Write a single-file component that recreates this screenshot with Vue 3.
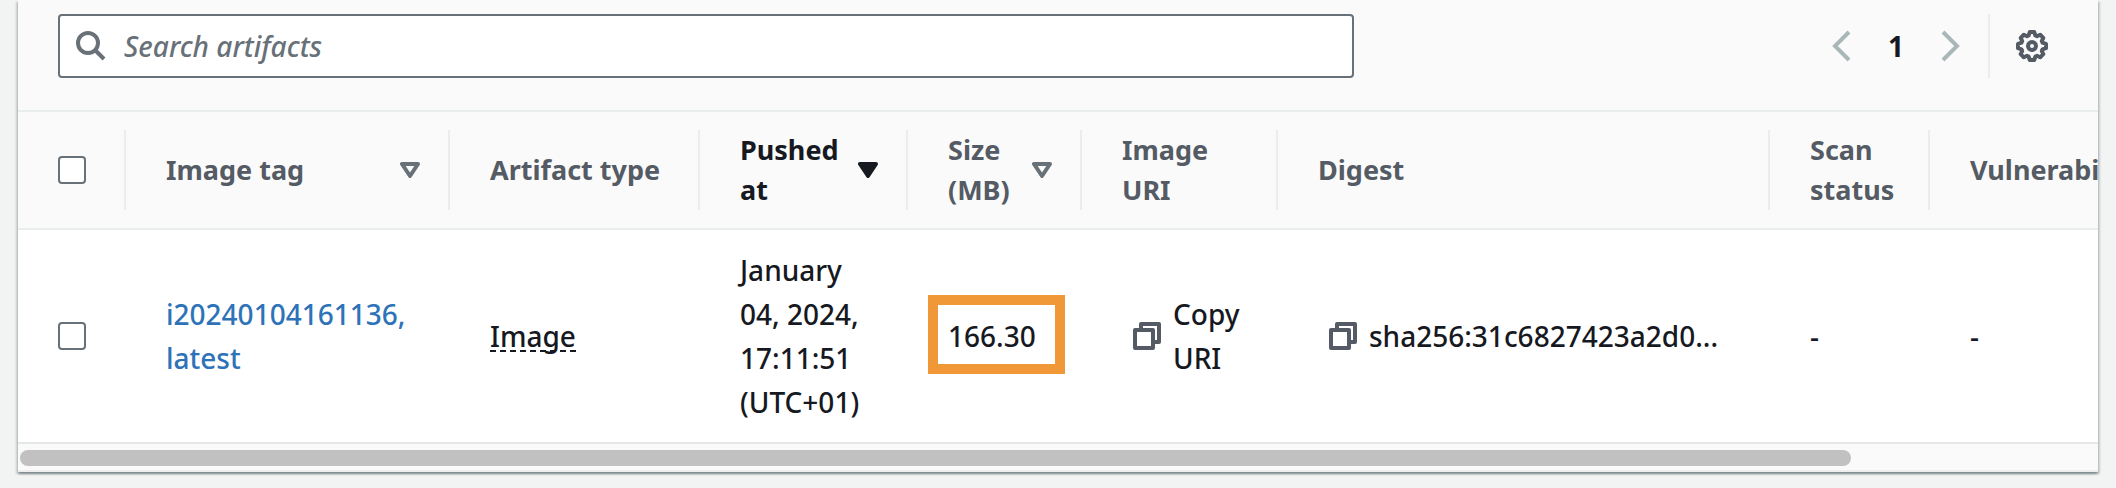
<script setup>
import { ref } from 'vue'

const query = ref('')
const columns = [
  { key: 'tag', label: 'Image tag', sort: 'none' },
  { key: 'type', label: 'Artifact type' },
  { key: 'pushed', label: 'Pushed at', sort: 'active' },
  { key: 'size', label: 'Size (MB)', sort: 'none' },
  { key: 'uri', label: 'Image URI' },
  { key: 'digest', label: 'Digest' },
  { key: 'scan', label: 'Scan status' },
  { key: 'vuln', label: 'Vulnerabilities' },
]
</script>

<template>
  <main class="page">
    <section class="panel">
      <div class="toolbar">
        <label class="search">
          <svg class="search-icon" viewBox="0 0 30 30" aria-hidden="true">
            <circle cx="12" cy="12" r="10" />
            <path d="M19 19l9 9" />
          </svg>
          <input v-model="query" type="search" placeholder="Search artifacts" aria-label="Search artifacts" />
        </label>
        <div class="tools">
          <nav class="pages" aria-label="Pagination">
            <button type="button" class="icon-button" aria-label="Previous page">
              <svg class="chevron" viewBox="0 0 20 32"><path d="M17 2L3 16l14 14" /></svg>
            </button>
            <button type="button" class="page-number" aria-current="page">1</button>
            <button type="button" class="icon-button" aria-label="Next page">
              <svg class="chevron" viewBox="0 0 20 32"><path d="M3 2l14 14L3 30" /></svg>
            </button>
          </nav>
          <button type="button" class="icon-button settings" aria-label="Preferences">
            <svg class="gear" viewBox="0 0 32 32">
              <path d="M13.8 2h4.400l1.200 3.500 1.600.7 3.200-1.500 3.100 3.100-1.500 3.200.7 1.600 3.500 1.200v4.400l-3.500 1.200-.7 1.600 1.500 3.200-3.100 3.100-3.200-1.500-1.600.7-1.200 3.500h-4.400l-1.200-3.500-1.600-.7-3.200 1.500-3.100-3.100 1.500-3.200-.7-1.600-3.500-1.200v-4.400l3.500-1.200.7-1.600-1.500-3.200 3.100-3.100 3.200 1.500 1.600-.7z" />
              <circle cx="16" cy="16" r="4" />
            </svg>
          </button>
        </div>
      </div>

      <div class="table-wrap">
        <table>
          <colgroup>
            <col class="c-check" />
            <col v-for="c in columns" :key="c.key" :class="'c-' + c.key" />
          </colgroup>
          <thead>
            <tr>
              <th scope="col" class="check"><input type="checkbox" aria-label="Select all artifacts" /></th>
              <th v-for="c in columns" :key="c.key" scope="col" :class="{ active: c.sort === 'active' }">
                <div class="head">
                  <span>{{ c.label }}</span>
                  <button v-if="c.sort" type="button" class="icon-button" :aria-label="'Sort by ' + c.label">
                    <svg class="sort" viewBox="0 0 20 16"><path d="M2 2h16l-8 12z" /></svg>
                  </button>
                </div>
              </th>
            </tr>
          </thead>
          <tbody>
            <tr>
              <td class="check"><input type="checkbox" aria-label="Select image latest" /></td>
              <td><a href="#">i20240104161136, latest</a></td>
              <td><span class="hint">Image</span></td>
              <td>January 04, 2024, 17:11:51 (UTC+01)</td>
              <td class="size">166.30<span class="marker"></span></td>
              <td>
                <div class="copy">
                  <button type="button" class="icon-button" aria-label="Copy image URI">
                    <svg class="copy-icon" viewBox="0 0 28 28"><path d="M8 6V2h18v18h-4M2 8h18v18H2z" /></svg>
                  </button>
                  <span>Copy URI</span>
                </div>
              </td>
              <td>
                <div class="copy">
                  <button type="button" class="icon-button" aria-label="Copy digest">
                    <svg class="copy-icon" viewBox="0 0 28 28"><path d="M8 6V2h18v18h-4M2 8h18v18H2z" /></svg>
                  </button>
                  <span class="digest">sha256:31c6827423a2d0...</span>
                </div>
              </td>
              <td>-</td>
              <td>-</td>
            </tr>
          </tbody>
        </table>
      </div>
      <div class="scroll-track"><div class="scroll-thumb"></div></div>
    </section>
  </main>
</template>

<style>
html {
  background: #f2f3f3;
}
</style>

<style scoped>
.page {
  padding: 0 18px 16px;
  background: #f2f3f3;
  color: #16191f;
  font: 500 28px/44px "Noto Sans", "Open Sans", sans-serif;
}
.panel {
  background: #fff;
  box-shadow: 0 2px 2px rgba(0, 28, 36, 0.3), 2px 2px 2px rgba(0, 28, 36, 0.15), -2px 2px 2px rgba(0, 28, 36, 0.15), 0 -2px 0 #fafafa;
}
.toolbar {
  display: flex;
  justify-content: space-between;
  align-items: center;
  padding: 14px 40px 32px;
  background: #fafafa;
  border-bottom: 2px solid #eaeded;
}
.search {
  display: flex;
  align-items: center;
  box-sizing: border-box;
  width: 1296px;
  max-width: 66%;
  height: 64px;
  padding: 0 16px;
  gap: 18px;
  background: #fff;
  border: 2px solid #687078;
  border-radius: 4px;
}
.search-icon {
  flex: none;
  width: 30px;
  height: 30px;
  fill: none;
  stroke: #687078;
  stroke-width: 4;
}
.search input {
  flex: 1;
  min-width: 0;
  padding: 0;
  border: 0;
  outline: 0;
  background: none;
  color: inherit;
  font: inherit;
}
.search input::placeholder {
  color: #687078;
  font-style: italic;
  opacity: 1;
}
.tools,
.pages {
  display: flex;
  align-items: center;
}
.pages {
  gap: 30px;
  padding-right: 28px;
}
.icon-button,
.page-number {
  display: flex;
  flex: none;
  padding: 0;
  border: 0;
  background: none;
  color: inherit;
  font: inherit;
}
.page-number {
  justify-content: center;
  width: 28px;
  font-weight: 700;
}
.settings {
  align-items: center;
  height: 64px;
  padding: 0 10px 0 26px;
  border-left: 2px solid #eaeded;
}
.chevron {
  width: 20px;
  height: 32px;
  fill: none;
  stroke: #aab7b8;
  stroke-width: 4;
}
.gear {
  width: 32px;
  height: 32px;
  fill: none;
  stroke: #545b64;
  stroke-width: 4;
  stroke-linejoin: round;
}
.table-wrap {
  overflow: hidden;
}
table {
  width: 2360px;
  table-layout: fixed;
  border-collapse: separate;
  border-spacing: 0;
}
.c-check { width: 108px; }
.c-tag { width: 324px; }
.c-type { width: 250px; }
.c-pushed { width: 208px; }
.c-size { width: 174px; }
.c-uri { width: 196px; }
.c-digest { width: 492px; }
.c-scan { width: 160px; }
th,
td {
  padding: 18px 30px 18px 40px;
  text-align: left;
  vertical-align: middle;
}
th {
  background: linear-gradient(#eaeded, #eaeded) right center / 2px 80px no-repeat #fafafa;
  border-bottom: 2px solid #eaeded;
  color: #545b64;
  font-size: 27px;
  font-weight: 700;
  line-height: 40px;
}
th.active {
  color: #16191f;
}
td {
  border-bottom: 2px solid #e6e8e8;
}
.head {
  display: flex;
  align-items: center;
  justify-content: space-between;
  min-height: 80px;
}
.check {
  padding-right: 0;
}
.check input {
  display: block;
  appearance: none;
  box-sizing: border-box;
  width: 28px;
  height: 28px;
  margin: 0;
  background: #fff;
  border: 2px solid #687078;
  border-radius: 4px;
}
.sort {
  width: 20px;
  height: 16px;
  fill: none;
  stroke: #687078;
  stroke-width: 4;
  stroke-linejoin: round;
}
.active .sort {
  fill: #16191f;
  stroke: #16191f;
}
a {
  color: #2e73b8;
  text-decoration: none;
}
.hint {
  border-bottom: 2px dashed #16191f;
  line-height: 28px;
  display: inline-block;
}
.size {
  position: relative;
}
.marker {
  position: absolute;
  inset: 65px 17px 68px 20px;
  border: 10px solid #f09837;
}
.copy {
  display: flex;
  align-items: center;
  gap: 12px;
  padding-left: 11px;
}
.copy-icon {
  width: 28px;
  height: 28px;
  fill: none;
  stroke: #545b64;
  stroke-width: 4;
  stroke-linejoin: round;
}
.digest {
  white-space: nowrap;
}
.scroll-track {
  padding: 6px 2px 4px;
  background: #fafafa;
  border-bottom: 2px solid #eee;
}
.scroll-thumb {
  width: 88.2%;
  height: 16px;
  background: #c1c1c1;
  border-radius: 8px;
}
</style>
